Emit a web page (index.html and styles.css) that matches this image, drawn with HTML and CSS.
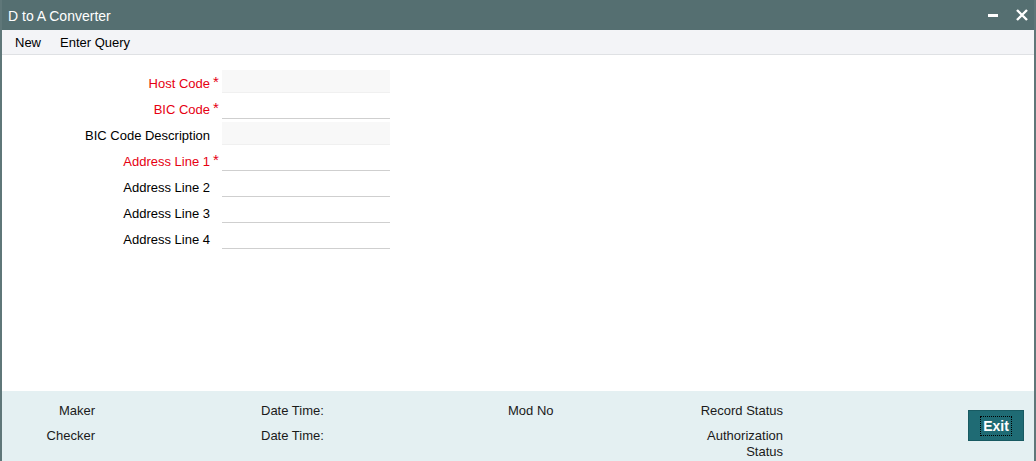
FILE: index.html
```html
<!DOCTYPE html>
<html>
<head>
<meta charset="utf-8">
<link rel="stylesheet" href="styles.css">
</head>
<body>
<div class="window">
  <div class="titlebar">
    <span class="title">D to A Converter</span>
    <div class="winbtns">
      <svg class="ico" width="14" height="14" viewBox="0 0 14 14"><rect x="2" y="6" width="10" height="3" fill="#fff"/></svg>
      <svg class="ico" width="14" height="14" viewBox="0 0 14 14"><path d="M2 2 L12 12 M12 2 L2 12" stroke="#fff" stroke-width="2.4" fill="none"/></svg>
    </div>
  </div>
  <div class="toolbar">
    <span class="tb-item">New</span>
    <span class="tb-item">Enter Query</span>
  </div>
  <div class="content">
    <div class="form">
      <label class="lbl req">Host Code</label><span class="star">*</span><div class="inp ro"></div>
      <label class="lbl req">BIC Code</label><span class="star">*</span><div class="inp"></div>
      <label class="lbl">BIC Code Description</label><span class="star"></span><div class="inp ro"></div>
      <label class="lbl req">Address Line 1</label><span class="star">*</span><div class="inp"></div>
      <label class="lbl">Address Line 2</label><span class="star"></span><div class="inp"></div>
      <label class="lbl">Address Line 3</label><span class="star"></span><div class="inp"></div>
      <label class="lbl">Address Line 4</label><span class="star"></span><div class="inp"></div>
    </div>
  </div>
  <div class="footer">
    <div class="audit">
      <span class="c1">Maker</span><span class="c2">Date Time:</span><span class="c3">Mod No</span><span class="c4">Record Status</span>
      <span class="c1">Checker</span><span class="c2">Date Time:</span><span class="c3"></span><span class="c4">Authorization<br>Status</span>
    </div>
    <button class="exit"><span class="exit-in">Exit</span></button>
  </div>
</div>
</body>
</html>
```
FILE: styles.css
```css
html, body { margin: 0; padding: 0; }
body {
  font-family: "Liberation Sans", Arial, sans-serif;
  font-size: 13px;
  color: #000;
  background: #fff;
}
.window {
  width: 1036px;
  height: 461px;
  box-sizing: border-box;
  display: flex;
  flex-direction: column;
  border-left: 2px solid #5f7779;
  border-right: 2px solid #5f7779;
  overflow: hidden;
}
.titlebar {
  height: 30px;
  flex: none;
  background: #556f71;
  display: flex;
  align-items: center;
  margin-left: -2px;
  margin-right: -2px;
  padding-left: 8px;
  padding-right: 7px;
}
.title {
  color: #fff;
  font-size: 14px;
  flex: 1;
  padding-top: 1px;
}
.winbtns { display: flex; gap: 15px; align-items: center; }
.ico { display: block; }
.toolbar {
  height: 24px;
  flex: none;
  background: #f3f4f7;
  border-bottom: 1px solid #dfe1e4;
  display: flex;
  align-items: center;
  padding-left: 13px;
  gap: 19px;
}
.tb-item { color: #000; }
.content {
  flex: 1;
  padding-top: 15px;
}
.form {
  display: grid;
  grid-template-columns: 208px 12px 168px;
  grid-auto-rows: 23px;
  row-gap: 3px;
  align-items: center;
}
.lbl { text-align: right; padding-top: 3px; }
.req { color: #e60012; }
.star {
  color: #e60012;
  font-size: 15px;
  padding-left: 3px;
  align-self: start;
  line-height: 16px;
  padding-top: 4px;
}
.inp {
  height: 23px;
  box-sizing: border-box;
  border-bottom: 1px solid #cfcfcf;
  background: #fff;
}
.inp.ro {
  background: #f8f8f8;
  border-bottom: 1px solid #f0f0f0;
}
.footer {
  height: 70px;
  flex: none;
  background: #e4f0f2;
  display: flex;
  align-items: flex-start;
  box-sizing: border-box;
  padding-top: 12px;
  padding-right: 10px;
}
.audit {
  display: grid;
  grid-template-columns: 93px 413px 100px 175px;
  grid-template-rows: 16px 32px;
  row-gap: 9px;
  line-height: 16px;
  color: #1a1a1a;
}
.c1 { text-align: right; }
.c2 { text-align: left; padding-left: 166px; }
.c3 { text-align: left; }
.c4 { text-align: right; }
.exit {
  margin-left: auto;
  margin-top: 7px;
  width: 56px;
  height: 31px;
  background: #1f6b74;
  border: 1px solid #185a62;
  color: #fff;
  font-family: "Liberation Sans", Arial, sans-serif;
  font-size: 14px;
  font-weight: bold;
  padding: 0;
  display: flex;
  align-items: center;
  justify-content: center;
}
.exit-in {
  outline: 1px dotted #000;
  padding: 1px 2px;
  line-height: 16px;
}
```
